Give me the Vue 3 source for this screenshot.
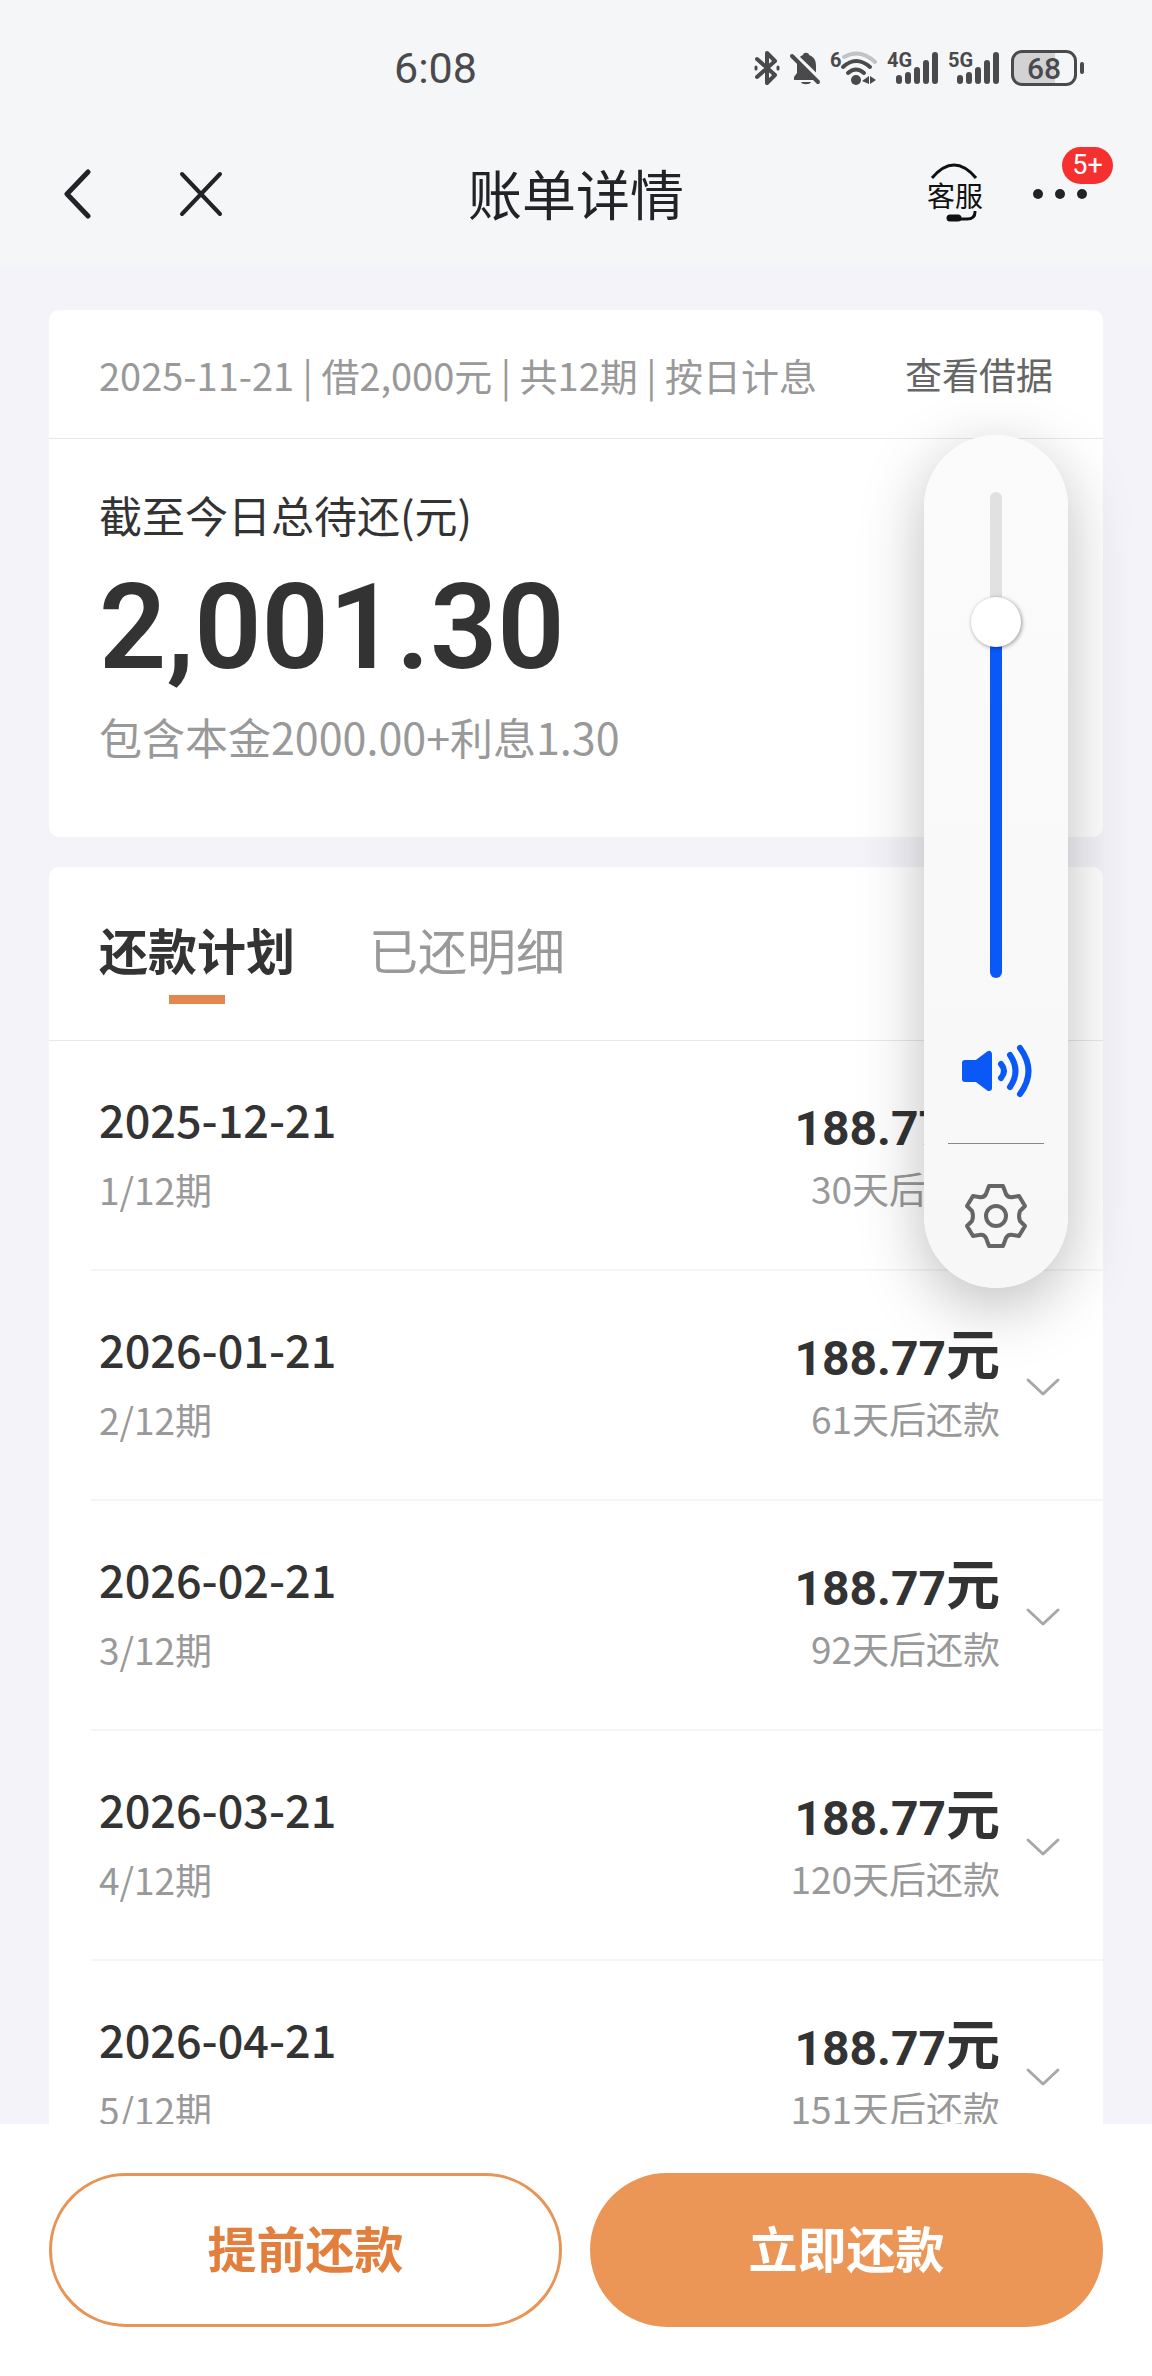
<script setup>
import { ref } from 'vue'

const volume = ref(76)
const activeTab = ref('plan')

const tabs = [
  { id: 'plan', label: '还款计划' },
  { id: 'paid', label: '已还明细' }
]

const periods = [
  { date: '2025-12-21', index: 1, amount: '188.77', days: 30 },
  { date: '2026-01-21', index: 2, amount: '188.77', days: 61 },
  { date: '2026-02-21', index: 3, amount: '188.77', days: 92 },
  { date: '2026-03-21', index: 4, amount: '188.77', days: 120 },
  { date: '2026-04-21', index: 5, amount: '188.77', days: 151 }
]

const networks = ['4G', '5G']
</script>

<template>
  <div class="page">
    <header class="top">
      <div class="status">
        <time class="clock">6:08</time>
        <div class="indicators">
          <svg class="bluetooth" width="26" height="36" viewBox="0 0 26 36" fill="none" stroke="#4a4a4c" stroke-width="4" stroke-linecap="round" stroke-linejoin="round">
            <path d="M3 9 L21 25 L13 33 V3 L21 11 L3 27" />
            <path d="M2 17 v2 M24 17 v2" stroke-width="3" />
          </svg>
          <svg class="bell" width="32" height="36" viewBox="0 0 32 36">
            <path d="M5 30 V27 L8 23 V15 C8 9 11 6 14 5 C14 2 20 2 20 5 C25 7 27 10 27 16 V23 L30 28 V30 Z" fill="#4a4a4c" />
            <path d="M12 32 H22 C21 35 13 35 12 32 Z" fill="#4a4a4c" />
            <path d="M5 4 L32 30" stroke="#f5f6f8" stroke-width="4" />
            <path d="M3 6 L29 32" stroke="#4a4a4c" stroke-width="4" stroke-linecap="round" />
          </svg>
          <div class="network">
            <span class="generation">6</span>
            <svg class="wifi" width="40" height="36" viewBox="0 0 40 36" fill="none" stroke-linecap="round">
              <path d="M6 7 Q22 -2 37 12" stroke="#c3c3c6" stroke-width="4" />
              <path d="M5 17 Q18 5 32 17" stroke="#4a4a4c" stroke-width="4" />
              <path d="M10 23 Q18 16 26 23" stroke="#4a4a4c" stroke-width="4" />
              <circle cx="18" cy="30" r="5" fill="#4a4a4c" />
              <path d="M24 31 L31 26 V34 Z M38 30 L32 26 V34 Z" fill="#4a4a4c" />
            </svg>
          </div>
          <div v-for="name in networks" :key="name" class="network">
            <span class="generation">{{ name }}</span>
            <svg class="bars" width="44" height="36" viewBox="0 0 44 36" stroke="#4a4a4c" stroke-width="6" stroke-linecap="round">
              <path d="M4 28 V31 M13 25 V31 M22 20 V31 M31 13 V31 M40 5 V31" />
            </svg>
          </div>
          <div class="battery"><span>68</span></div>
        </div>
      </div>

      <nav class="nav">
        <div class="nav-left">
          <button class="icon-button" type="button" aria-label="返回">
            <svg width="48" height="52" viewBox="0 0 48 52" fill="none" stroke="#222326" stroke-width="5" stroke-linecap="round" stroke-linejoin="round">
              <path d="M35 5 L14 27 L35 49" />
            </svg>
          </button>
          <button class="icon-button" type="button" aria-label="关闭">
            <svg width="48" height="52" viewBox="0 0 48 52" fill="none" stroke="#222326" stroke-width="4" stroke-linecap="round">
              <path d="M5 7 L43 47 M43 7 L5 47" />
            </svg>
          </button>
        </div>
        <h1 class="title">账单详情</h1>
        <div class="nav-right">
          <button class="icon-button service" type="button">
            <svg width="56" height="16" viewBox="0 0 56 16" fill="none" stroke="#111" stroke-width="3">
              <path d="M5 15 Q27 -11 49 15" />
            </svg>
            <span>客服</span>
            <svg width="56" height="12" viewBox="0 0 56 12" fill="none" stroke="#111" stroke-linecap="round">
              <path d="M48 1 Q48 8 40 8 H24" stroke-width="3" />
              <path d="M23 7 H31" stroke-width="7" />
            </svg>
          </button>
          <button class="icon-button more" type="button" aria-label="更多">
            <svg width="56" height="52" viewBox="0 0 56 52" fill="#222326">
              <circle cx="6" cy="27" r="5" />
              <circle cx="28" cy="27" r="5" />
              <circle cx="50" cy="27" r="5" />
            </svg>
            <span class="badge">5+</span>
          </button>
        </div>
      </nav>
    </header>

    <main class="content">
      <section class="card">
        <div class="loan">
          <span class="terms">2025-11-21 | 借2,000元 | 共12期 | 按日计息</span>
          <a class="receipt" href="#">查看借据</a>
        </div>
        <div class="summary">
          <p class="label">截至今日总待还(元)</p>
          <p class="total">2,001.30</p>
          <p class="detail">包含本金2000.00+利息1.30</p>
        </div>
      </section>

      <section class="card">
        <div class="tabs" role="tablist">
          <button
            v-for="tab in tabs"
            :key="tab.id"
            class="tab"
            :class="{ active: activeTab === tab.id }"
            type="button"
            role="tab"
            :aria-selected="activeTab === tab.id"
            @click="activeTab = tab.id"
          >{{ tab.label }}</button>
        </div>
        <ul class="plan">
          <li v-for="period in periods" :key="period.date" class="period">
            <div class="when">
              <p class="date">{{ period.date }}</p>
              <p class="note">{{ period.index }}/12期</p>
            </div>
            <div class="due">
              <p class="amount"><span class="figure">{{ period.amount }}</span>元</p>
              <p class="note">{{ period.days }}天后还款</p>
            </div>
            <button class="icon-button expand" type="button" aria-label="展开">
              <svg width="36" height="20" viewBox="0 0 36 20" fill="none" stroke="#a8a8a8" stroke-width="3" stroke-linecap="round" stroke-linejoin="round">
                <path d="M3 3 L18 17 L33 3" />
              </svg>
            </button>
          </li>
        </ul>
      </section>
    </main>

    <footer class="actions">
      <button class="action outline" type="button">提前还款</button>
      <button class="action solid" type="button">立即还款</button>
    </footer>

    <aside class="volume">
      <input
        v-model="volume"
        class="slider"
        type="range"
        min="0"
        max="100"
        aria-label="音量"
        :style="{ '--level': volume + '%' }"
      />
      <svg class="speaker" width="72" height="56" viewBox="0 0 72 56" fill="none" stroke="#0a59f7" stroke-width="6" stroke-linecap="round" stroke-linejoin="round">
        <path d="M5 20 H17 L29 11 V45 L17 36 H5 Z" fill="#0a59f7" />
        <path d="M41 21 Q47 28 41 35" />
        <path d="M50 12 Q61 28 50 44" />
        <path d="M60 5 Q77 28 60 51" />
      </svg>
      <hr class="rule" />
      <button class="icon-button" type="button" aria-label="声音设置">
        <svg width="68" height="68" viewBox="-34 -34 68 68" fill="none" stroke="#666" stroke-width="4" stroke-linejoin="round">
          <path d="M-7 -30 H7 L10 -22 Q12 -18 17 -19 L23 -20 L29 -10 L24 -5 Q22 0 24 5 L29 10 L23 20 L17 19 Q12 18 10 22 L7 30 H-7 L-10 22 Q-12 18 -17 19 L-23 20 L-29 10 L-24 5 Q-22 0 -24 -5 L-29 -10 L-23 -20 L-17 -19 Q-12 -18 -10 -22 Z" />
          <circle r="10" />
        </svg>
      </button>
    </aside>
  </div>
</template>

<style>
body {
  background: #f3f3f9;
}
</style>

<style scoped>
.page {
  display: flex;
  flex-direction: column;
  height: 100vh;
  background: #f3f3f9;
  color: #333;
  font-family: "Noto Sans CJK SC", sans-serif;
}

p,
h1,
ul {
  margin: 0;
  padding: 0;
}

button {
  font-family: inherit;
  cursor: pointer;
}

svg {
  display: block;
}

.icon-button {
  padding: 0;
  border: 0;
  background: none;
}

.top {
  flex: none;
  padding-bottom: 16px;
  background: #f5f6f8;
}

.status {
  display: flex;
  align-items: center;
  justify-content: space-between;
  height: 136px;
  padding: 0 68px 0 394px;
  color: #4a4a4c;
}

.clock {
  font-family: "Roboto", sans-serif;
  font-size: 43px;
}

.indicators {
  display: flex;
  align-items: center;
  gap: 9px;
}

.network {
  position: relative;
  display: flex;
  padding-left: 8px;
}

.generation {
  position: absolute;
  left: 0;
  top: 0;
  font-family: "Roboto", sans-serif;
  font-size: 20px;
  font-weight: 700;
  line-height: 20px;
}

.battery {
  position: relative;
  box-sizing: border-box;
  width: 66px;
  height: 36px;
  margin: 0 7px 0 2px;
  border: 3px solid #4a4a4c;
  border-radius: 11px;
  background: linear-gradient(to right, #d2d2d4 68%, #f5f6f8 68%);
  font-family: "Roboto", sans-serif;
  font-size: 30px;
  font-weight: 500;
  line-height: 31px;
  text-align: center;
}

.battery::after {
  content: "";
  position: absolute;
  right: -10px;
  top: 9px;
  width: 4px;
  height: 12px;
  border-radius: 2px;
  background: #4a4a4c;
}

.nav {
  display: grid;
  grid-template-columns: 1fr auto 1fr;
  align-items: center;
  height: 113px;
  padding: 0 64px 0 53px;
}

.nav-left {
  display: flex;
  gap: 76px;
}

.nav-right {
  display: flex;
  align-items: center;
  justify-content: flex-end;
  gap: 49px;
}

.title {
  padding-left: 11px;
  color: #222326;
  font-size: 54px;
  font-weight: 400;
  line-height: 76px;
}

.service {
  color: #111;
  font-size: 28px;
  line-height: 32px;
}

.more {
  position: relative;
}

.badge {
  position: absolute;
  left: 30px;
  top: -20px;
  width: 51px;
  border-radius: 19px;
  background: #f5312f;
  color: #fff;
  font-family: "Roboto", sans-serif;
  font-size: 27px;
  line-height: 37px;
}

.content {
  display: flex;
  flex: 1;
  flex-direction: column;
  gap: 30px;
  min-height: 0;
  padding: 45px 49px 0;
  overflow: hidden;
}

.card {
  flex: none;
  border-radius: 10px;
  background: #fff;
}

.loan {
  display: flex;
  align-items: center;
  justify-content: space-between;
  height: 128px;
  padding: 0 50px;
  border-bottom: 1px solid #e8e8e8;
}

.terms {
  color: #999;
  font-size: 38px;
}

.receipt {
  color: #666;
  font-size: 37px;
  text-decoration: none;
}

.summary {
  padding: 45px 50px 71px;
}

.label,
.detail {
  font-size: 43px;
  line-height: 60px;
}

.total {
  margin: 24px 0 18px;
  font-family: "Roboto", sans-serif;
  font-size: 118px;
  font-weight: 600;
  line-height: 120px;
}

.detail {
  color: #999;
}

.tabs {
  display: flex;
  gap: 74px;
  height: 173px;
  padding: 0 50px;
  border-bottom: 1px solid #e8e8e8;
}

.tab {
  position: relative;
  padding: 0 0 10px;
  border: 0;
  background: none;
  color: #999;
  font-size: 49px;
}

.tab.active {
  color: #333;
  font-weight: 700;
}

.tab.active::after {
  content: "";
  position: absolute;
  left: calc(50% - 28px);
  bottom: 36px;
  width: 56px;
  height: 9px;
  background: #e3874f;
}

.plan {
  list-style: none;
}

.period {
  display: flex;
  align-items: center;
  box-sizing: border-box;
  height: 230px;
  margin-left: 42px;
  padding: 0 42px 6px 8px;
  border-bottom: 2px solid #f5f5f5;
}

.date {
  margin-bottom: 16px;
  font-size: 45px;
  font-weight: 500;
  line-height: 58px;
}

.note {
  color: #999;
  font-size: 37px;
  line-height: 50px;
}

.due {
  margin-left: auto;
  text-align: right;
}

.amount {
  margin-bottom: 10px;
  font-size: 54px;
  font-weight: 700;
  line-height: 60px;
}

.figure {
  font-family: "Roboto", sans-serif;
  font-size: 48px;
  line-height: 48px;
}

.expand {
  margin: 10px 0 0 25px;
}

.actions {
  display: flex;
  flex: none;
  gap: 28px;
  padding: 49px;
  background: #fff;
}

.action {
  box-sizing: border-box;
  flex: 1;
  height: 154px;
  padding: 0 0 8px;
  border: 3px solid #e79456;
  border-radius: 77px;
  font-size: 49px;
  font-weight: 700;
}

.outline {
  background: #fff;
  color: #e37f3c;
}

.solid {
  background: #eb9656;
  border-color: #eb9656;
  color: #fff;
}

.volume {
  position: fixed;
  top: 435px;
  right: 84px;
  display: flex;
  flex-direction: column;
  align-items: center;
  box-sizing: border-box;
  width: 144px;
  padding: 57px 0 38px;
  border-radius: 72px;
  background: linear-gradient(#fbfbfb, #f7f7f8);
  box-shadow: 0 18px 64px rgba(0, 0, 0, 0.26);
}

.slider {
  appearance: none;
  writing-mode: vertical-lr;
  direction: rtl;
  width: 50px;
  height: 486px;
  margin: 0 0 65px;
  background: none;
}

.slider::-webkit-slider-runnable-track {
  width: 12px;
  border-radius: 6px;
  background: linear-gradient(to top, #0a59f7 var(--level), #e1e1e1 var(--level));
}

.slider::-webkit-slider-thumb {
  appearance: none;
  width: 50px;
  height: 50px;
  margin-left: -19px;
  border-radius: 50%;
  background: #fff;
  box-shadow: 1px 1px 4px rgba(0, 0, 0, 0.4);
}

.rule {
  width: 96px;
  margin: 44px 0 38px;
  border: 0;
  border-top: 1px solid #888;
}
</style>
